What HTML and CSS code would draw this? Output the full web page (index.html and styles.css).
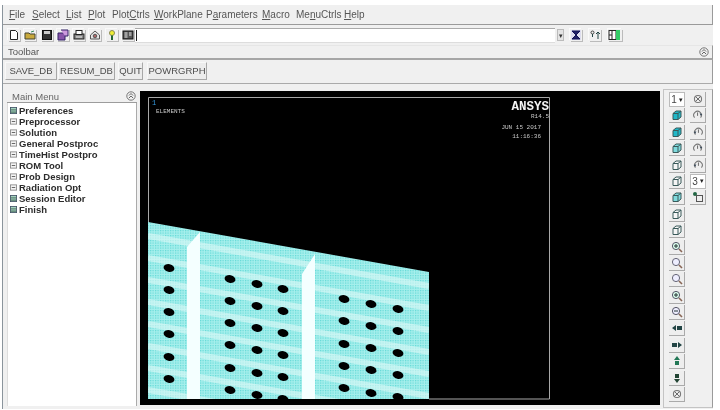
FILE: index.html
```html
<!DOCTYPE html>
<html lang="en">
<head>
<meta charset="utf-8">
<title>ANSYS</title>
<link rel="stylesheet" href="styles.css">
</head>
<body>
<svg class="defs" width="0" height="0" aria-hidden="true">
  <defs>
    <symbol id="cube" viewBox="0 0 12 12"><path d="M2 4.500 5 2h5v6l-3 2.500H2z" fill="var(--f,#f6f6f6)" stroke="#3a5a5a"/><path d="M2 4.500h5v6M7 4.500 10 2" fill="none" stroke="#3a5a5a"/></symbol>
    <symbol id="rot-x" viewBox="0 0 14 12"><circle cx="7" cy="6" r="4.200" fill="none" stroke="#777" stroke-width="1.200"/><path d="m4.500 3.500 5 5M9.500 3.500l-5 5" stroke="#555"/></symbol>
    <symbol id="rot-a" viewBox="0 0 14 12"><path d="M3 9a4.500 4.500 0 1 1 7 0" fill="none" stroke="#777" stroke-width="1.200"/><path d="M6.500 3v4" stroke="#555"/><path d="m9 4 3 1-2 2z" fill="#345"/></symbol>
    <symbol id="rot-b" viewBox="0 0 14 12"><path d="M11 9a4.500 4.500 0 1 0-7 0" fill="none" stroke="#777" stroke-width="1.200"/><path d="M7.500 3v4" stroke="#555"/><path d="m5 5-3 1 2 2z" fill="#345"/></symbol>
    <symbol id="mag" viewBox="0 0 12 12"><circle cx="5" cy="5" r="3.600" fill="#eef" stroke="#667"/><path d="m8 8 3 3" stroke="#865" stroke-width="1.600"/></symbol>
    <symbol id="mag-p" viewBox="0 0 12 12"><circle cx="5" cy="5" r="3.600" fill="#dfe" stroke="#556"/><path d="M3 5h4M5 3v4" stroke="#233"/><path d="m8 8 3 3" stroke="#865" stroke-width="1.600"/></symbol>
    <symbol id="mag-m" viewBox="0 0 12 12"><circle cx="5" cy="5" r="3.600" fill="#eef" stroke="#556"/><path d="M3 5h4" stroke="#233"/><path d="m8 8 3 3" stroke="#865" stroke-width="1.600"/></symbol>
    <symbol id="plus" viewBox="0 0 8 8"><rect x=".5" y="1" width="7" height="6" fill="#f4f4f4" stroke="#888"/><path d="M2 4h4" stroke="#555"/></symbol>
    <symbol id="book" viewBox="0 0 8 8"><rect x=".5" y=".5" width="7" height="7" fill="#cfe" stroke="#456"/><path d="M1 2.500h6M1 4.500h6M1 6h6" stroke="#354"/></symbol>
    <symbol id="fold" viewBox="0 0 10 10"><circle cx="5" cy="5" r="4.200" fill="none" stroke="#777"/><path d="m3 4.500 2-2 2 2M3 7l2-2 2 2" fill="none" stroke="#666"/></symbol>
  </defs>
</svg>

<div class="app">
  <nav class="menubar">
    <span class="m1"><u>F</u>ile</span>
    <span class="m2"><u>S</u>elect</span>
    <span class="m3"><u>L</u>ist</span>
    <span class="m4"><u>P</u>lot</span>
    <span class="m5">Plot<u>C</u>trls</span>
    <span class="m6"><u>W</u>orkPlane</span>
    <span class="m7">P<u>a</u>rameters</span>
    <span class="m8"><u>M</u>acro</span>
    <span class="m9">Me<u>n</u>uCtrls</span>
    <span><u>H</u>elp</span>
  </nav>

  <div class="cmdbar">
    <div class="tools">
      <svg class="tool" viewBox="0 0 12 12"><path d="M2.500 1.500h5l2 2v7h-7z" fill="#fff" stroke="#222"/></svg>
      <svg class="tool" viewBox="0 0 12 12"><path d="M1 4h4l1 1h5v5H1z" fill="#c9a93c" stroke="#443"/><path d="M7 3l3-1" stroke="#385"/></svg>
      <svg class="tool" viewBox="0 0 12 12"><rect x="1.500" y="1.500" width="9" height="9" fill="#333" stroke="#111"/><rect x="3" y="2" width="6" height="3" fill="#ccc"/></svg>
      <svg class="tool" viewBox="0 0 12 12"><path d="M1 4h7v7H1z" fill="#85a" stroke="#326"/><path d="M4 1h7v6H8" fill="#c9d" stroke="#326"/></svg>
      <svg class="tool" viewBox="0 0 12 12"><rect x="1" y="5" width="10" height="5" fill="#888" stroke="#222"/><rect x="3" y="1.500" width="6" height="4" fill="#fff" stroke="#222"/><path d="M3 8h6" stroke="#eee"/></svg>
      <svg class="tool" viewBox="0 0 12 12"><path d="M1.500 6 6 2l4.500 4v4h-9z" fill="#e8e8e8" stroke="#555"/><circle cx="6" cy="7" r="1.800" fill="#a66" stroke="#555"/></svg>
      <svg class="tool" viewBox="0 0 12 12"><circle cx="6" cy="4" r="2.500" fill="#ee3" stroke="#885"/><path d="M6 6.500V11" stroke="#263" stroke-width="2"/></svg>
      <svg class="tool" viewBox="0 0 12 12"><rect x="1" y="2" width="10" height="8" fill="#555" stroke="#111"/><path d="M2.500 4h3M2.500 6h3M2.500 8h3M7 4h2.500M7 6h2.500" stroke="#eee"/></svg>
    </div>
    <div class="cmdinput"><span class="caret"></span></div>
    <div class="combo-arrow">▾</div>
    <div class="tools tools-right">
      <svg class="tool" viewBox="0 0 12 12"><rect x="1" y="1" width="10" height="10" fill="#dde"/><path d="M2 2h8L6 6l4 4H2l4-4z" fill="#226" stroke="#115"/></svg>
      <svg class="tool" viewBox="0 0 12 12"><circle cx="3.500" cy="3.500" r="1.500" fill="none" stroke="#444"/><path d="M3.500 5v3M9 10V3M7 5l2-2 2 2" fill="none" stroke="#244"/></svg>
      <svg class="tool tool-wide" viewBox="0 0 14 12"><rect x="1" y="1.500" width="7" height="9" fill="#fff" stroke="#222"/><rect x="8" y="1" width="4" height="10" fill="#3c6"/><path d="M4 1.500v9M1 6h3" stroke="#222"/></svg>
    </div>
  </div>

  <div class="panel-head"><span>Toolbar</span><svg class="fold"><use href="#fold"/></svg></div>
  <div class="buttons">
    <button class="btn b-save">SAVE_DB</button>
    <button class="btn b-res">RESUM_DB</button>
    <button class="btn b-quit">QUIT</button>
    <button class="btn b-pow">POWRGRPH</button>
  </div>

  <main class="main">
    <aside class="mainmenu">
      <div class="mm-head"><span>Main Menu</span><svg class="fold"><use href="#fold"/></svg></div>
      <ul class="tree">
        <li><svg class="ti"><use href="#book"/></svg>Preferences</li>
        <li><svg class="ti"><use href="#plus"/></svg>Preprocessor</li>
        <li><svg class="ti"><use href="#plus"/></svg>Solution</li>
        <li><svg class="ti"><use href="#plus"/></svg>General Postproc</li>
        <li><svg class="ti"><use href="#plus"/></svg>TimeHist Postpro</li>
        <li><svg class="ti"><use href="#plus"/></svg>ROM Tool</li>
        <li><svg class="ti"><use href="#plus"/></svg>Prob Design</li>
        <li><svg class="ti"><use href="#plus"/></svg>Radiation Opt</li>
        <li><svg class="ti"><use href="#book"/></svg>Session Editor</li>
        <li><svg class="ti"><use href="#book"/></svg>Finish</li>
      </ul>
    </aside>

    <section class="graphics">
      <svg class="scene" viewBox="140 91 520 314" width="520" height="314">
        <defs>
          <pattern id="mesh" width="2.500" height="2.500" patternUnits="userSpaceOnUse">
            <rect width="2.500" height="2.500" fill="#a6efec"/>
            <rect width="1.200" height="1.200" fill="#62d9d7"/>
          </pattern>
          <clipPath id="meshclip"><path d="M148 222 429 272V399H148z"/></clipPath>
          <ellipse id="hole" rx="5.500" ry="3.800" transform="rotate(12)"/>
        </defs>
        <path class="frame" d="M148.500 399V97.500H549.500V399H429"/>
        <g clip-path="url(#meshclip)">
          <rect x="148" y="222" width="282" height="178" fill="url(#mesh)"/>
          <g class="bands">
            <path d="M148 236 429 286M148 258 429 308M148 280 429 330M148 302 429 352M148 324 429 374M148 346 429 396M148 368 429 418M148 390 429 440"/>
          </g>
          <path class="web" d="M187 247 200 232V399H187zM302 274 315 254V399H302z"/>
          <g class="holes">
            <use href="#hole" x="169" y="268"/><use href="#hole" x="169" y="290"/><use href="#hole" x="169" y="312"/><use href="#hole" x="169" y="334"/><use href="#hole" x="169" y="357"/><use href="#hole" x="169" y="379"/>
            <use href="#hole" x="230" y="279"/><use href="#hole" x="230" y="301"/><use href="#hole" x="230" y="323"/><use href="#hole" x="230" y="345"/><use href="#hole" x="230" y="368"/><use href="#hole" x="230" y="390"/>
            <use href="#hole" x="257" y="284"/><use href="#hole" x="257" y="306"/><use href="#hole" x="257" y="328"/><use href="#hole" x="257" y="350"/><use href="#hole" x="257" y="373"/><use href="#hole" x="257" y="395"/>
            <use href="#hole" x="283" y="289"/><use href="#hole" x="283" y="311"/><use href="#hole" x="283" y="333"/><use href="#hole" x="283" y="355"/><use href="#hole" x="283" y="377"/><use href="#hole" x="283" y="399"/>
            <use href="#hole" x="344" y="299"/><use href="#hole" x="344" y="321"/><use href="#hole" x="344" y="344"/><use href="#hole" x="344" y="366"/><use href="#hole" x="344" y="388"/>
            <use href="#hole" x="371" y="304"/><use href="#hole" x="371" y="326"/><use href="#hole" x="371" y="348"/><use href="#hole" x="371" y="370"/><use href="#hole" x="371" y="393"/>
            <use href="#hole" x="398" y="309"/><use href="#hole" x="398" y="331"/><use href="#hole" x="398" y="353"/><use href="#hole" x="398" y="375"/><use href="#hole" x="398" y="397"/>
          </g>
        </g>
        <text class="t-num" x="152" y="105">1</text>
        <text class="t-small" x="156" y="113">ELEMENTS</text>
        <text class="t-brand" x="549" y="110">ANSYS</text>
        <text class="t-small t-end" x="549" y="118">R14.5</text>
        <text class="t-small t-end" x="541" y="129">JUN 15 2017</text>
        <text class="t-small t-end" x="541" y="138">11:16:36</text>
      </svg>
    </section>

    <aside class="viewbar">
      <div class="vcol">
        <div class="vbtn combo">1<i>▾</i></div>
        <div class="vbtn"><svg class="vi c1"><use href="#cube"/></svg></div>
        <div class="vbtn"><svg class="vi c1"><use href="#cube"/></svg></div>
        <div class="vbtn"><svg class="vi c2"><use href="#cube"/></svg></div>
        <div class="vbtn"><svg class="vi"><use href="#cube"/></svg></div>
        <div class="vbtn"><svg class="vi"><use href="#cube"/></svg></div>
        <div class="vbtn"><svg class="vi c2"><use href="#cube"/></svg></div>
        <div class="vbtn"><svg class="vi"><use href="#cube"/></svg></div>
        <div class="vbtn"><svg class="vi"><use href="#cube"/></svg></div>
        <div class="vbtn"><svg class="vi"><use href="#mag-p"/></svg></div>
        <div class="vbtn"><svg class="vi"><use href="#mag"/></svg></div>
        <div class="vbtn"><svg class="vi"><use href="#mag"/></svg></div>
        <div class="vbtn"><svg class="vi"><use href="#mag-p"/></svg></div>
        <div class="vbtn"><svg class="vi"><use href="#mag-m"/></svg></div>
        <div class="vbtn"><svg class="vi" viewBox="0 0 12 12"><path d="m1 6 4-3v6zM6 4h5v4H6z" fill="#244"/></svg></div>
        <div class="vbtn"><svg class="vi" viewBox="0 0 12 12"><path d="m11 6-4-3v6zM1 4h5v4H1z" fill="#244"/></svg></div>
        <div class="vbtn"><svg class="vi" viewBox="0 0 12 12"><path d="m6 1 3 4H3zM4 6h4v4H4z" fill="#275"/></svg></div>
        <div class="vbtn"><svg class="vi" viewBox="0 0 12 12"><path d="m6 11 3-4H3zM4 2h4v4H4z" fill="#243"/></svg></div>
        <div class="vbtn"><svg class="vi"><use href="#rot-x"/></svg></div>
      </div>
      <div class="vcol">
        <div class="vbtn"><svg class="vi"><use href="#rot-x"/></svg></div>
        <div class="vbtn"><svg class="vi"><use href="#rot-a"/></svg></div>
        <div class="vbtn"><svg class="vi"><use href="#rot-b"/></svg></div>
        <div class="vbtn"><svg class="vi"><use href="#rot-a"/></svg></div>
        <div class="vbtn"><svg class="vi"><use href="#rot-b"/></svg></div>
        <div class="vbtn combo">3<i>▾</i></div>
        <div class="vbtn"><svg class="vi" viewBox="0 0 12 12"><circle cx="3" cy="3" r="2" fill="#264"/><rect x="4.500" y="4.500" width="6" height="6" fill="#eee" stroke="#555"/></svg></div>
      </div>
    </aside>
  </main>
</div>
</body>
</html>
```

FILE: styles.css
```css
* { box-sizing: border-box; }
html, body { margin: 0; padding: 0; background: #fff; }
body { width: 720px; height: 410px; overflow: hidden; font-family: "Liberation Sans", Arial, sans-serif; color: #444; }
.defs { position: absolute; }

.app {
  width: 711px; height: 404px; margin: 5px 0 0 2px;
  display: flex; flex-direction: column;
  background: #f0f0f0;
  border-left: 1px solid #8a949c;
  filter: blur(.35px);
}

.menubar {
  height: 20px; flex: none; display: flex; align-items: center;
  padding-left: 6px; font-size: 10px; color: #555;
  border-bottom: 1px solid #9a9a9a; border-right: 1px solid #9a9a9a;
}
.menubar span { white-space: nowrap; }
.m1 { width: 23px; } .m2 { width: 34px; } .m3 { width: 22px; } .m4 { width: 24px; }
.m5 { width: 42px; } .m6 { width: 52px; } .m7 { width: 56px; } .m8 { width: 34px; } .m9 { width: 48px; }

.cmdbar { height: 20px; flex: none; display: flex; align-items: center; padding-left: 5px; }
.tools { display: flex; gap: 4.300px; width: 127px; flex: none; }
.tool { width: 12px; height: 12px; flex: none; box-shadow: 1px 1px 0 #bbb, -1px -1px 0 #fafafa; }
.tool-wide { width: 14px; }
.cmdinput { width: 420px; height: 15px; flex: none; background: #fff; border-top: 1px solid #aaa; border-bottom: 1px solid #ddd; display: flex; align-items: center; }
.caret { width: 1px; height: 11px; background: #222; margin-left: 1px; }
.combo-arrow { width: 7px; height: 12px; margin-left: 2px; font-size: 7px; line-height: 11px; text-align: center; background: #e4e4e4; border: 1px solid #bbb; color: #333; overflow: hidden; }
.tools-right { width: auto; gap: 7px; margin-left: 6px; }

.panel-head {
  height: 15px; flex: none; display: flex; justify-content: space-between; align-items: center;
  padding: 0 3px 1px 5px; font-size: 9.500px; color: #555;
  border-top: 1px solid #e6e6e6; border-bottom: 2px solid #a6a6a6; border-right: 1px solid #9a9a9a;
}
.fold { width: 10px; height: 10px; flex: none; }

.buttons {
  height: 24px; flex: none; display: flex; align-items: center; gap: 1px; padding: 0 0 2px 2px;
  border-bottom: 1px solid #aaa; border-right: 1px solid #9a9a9a;
}
.btn {
  height: 18px; padding: 0; font: 9.500px "Liberation Sans", Arial, sans-serif; color: #4c4c4c;
  background: #ececec; border: 1px solid; border-color: #f8f8f8 #a8a8a8 #a8a8a8 #f8f8f8;
}
.b-save { width: 52px; } .b-res { width: 57px; } .b-quit { width: 25px; margin-left: 2px; } .b-pow { width: 60px; margin-left: 3px; }

.main { flex: 1; display: flex; min-height: 0; }

.mainmenu { width: 137px; flex: none; padding: 6px 3px 0 0; display: flex; flex-direction: column; }
.mm-head {
  height: 13px; flex: none; margin-left: 4px; padding: 0 1px 0 5px;
  display: flex; justify-content: space-between; align-items: center;
  font-size: 9.500px; color: #666; border-bottom: 1px solid #9c9c9c;
}
.tree {
  list-style: none; margin: 0 0 3px 4px; padding: 2px 0 0 1px; flex: 1;
  background: #fff; border-left: 1px solid #ddd; border-right: 1px solid #aaa;
  font-size: 9.500px; font-weight: bold; color: #2c2c2c;
}
.tree li { height: 11px; line-height: 11px; display: flex; align-items: center; white-space: nowrap; }
.ti { width: 7px; height: 7px; margin: 0 2px 0 1px; flex: none; }

.graphics { width: 520px; height: 314px; margin: 7px 0 0 0; flex: none; background: #000; }
.scene { display: block; }
.frame { fill: none; stroke: #a8a8a8; stroke-width: 1; }
.bands path { fill: none; stroke: #e4f9f8; stroke-width: 6; stroke-opacity: .55; }
.web { fill: #f4ffff; }
.holes { fill: #000; }
.t-num { font: 7px "Liberation Mono", monospace; fill: #39d; }
.t-small { font: 6px "Liberation Mono", monospace; fill: #c8c8c8; }
.t-end { text-anchor: end; }
.t-brand { font: bold 12.500px "Liberation Mono", monospace; fill: #f4f4f4; text-anchor: end; }

.viewbar {
  width: 50px; flex: none; margin: 5px 0 1px 3px; padding: 2px 0 0 5px;
  display: flex; gap: 5px; background: #f0f0f0;
  border: 1px solid #c4c4c4; border-right-color: #9a9a9a;
}
.vcol { width: 16px; display: flex; flex-direction: column; }
.vbtn {
  width: 16px; height: 15px; margin-bottom: 1.400px; flex: none;
  display: flex; align-items: center; justify-content: center;
  background: #eee; border-right: 1px solid #aaa; border-bottom: 1px solid #aaa;
}
.vi { width: 12px; height: 12px; }
.c1 { --f: #20b8c8; }
.c2 { --f: #7fdadd; }
.combo { font-size: 10px; color: #444; background: #fff; gap: 2px; border: 1px solid #bbb; }
.combo i { font-style: normal; font-size: 7px; color: #222; }
```
